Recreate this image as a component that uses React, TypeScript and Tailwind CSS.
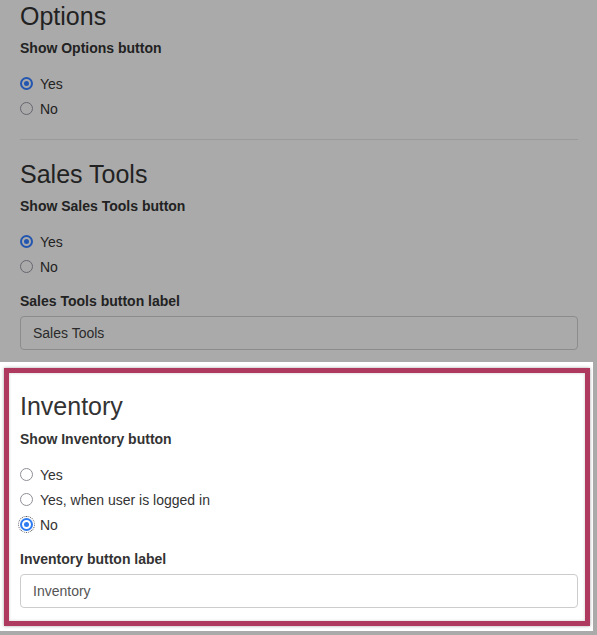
import React from 'react'

type RadioProps = { label: string; checked?: boolean; dim?: boolean; focus?: boolean }

function Radio({ label, checked, dim, focus }: RadioProps) {
  const ring = checked
    ? dim
      ? 'border-[#2356b0]'
      : 'border-[#2f7bf0]'
    : dim
      ? 'border-[#666670]'
      : 'border-[#8e8e96]'
  return (
    <div className="flex h-[25px] items-center gap-[7px]">
      <span
        className={`flex h-[13px] w-[13px] items-center justify-center rounded-full ${checked ? 'border-2' : 'border-[1.5px]'} ${ring} ${focus ? 'outline-1 outline-dotted outline-offset-1 outline-[#555]' : ''}`}
      >
        {checked && (
          <span className={`h-[5px] w-[5px] rounded-full ${dim ? 'bg-[#2356b0]' : 'bg-[#2f7bf0]'}`} />
        )}
      </span>
      <span className={`text-[14px] leading-[20px] ${dim ? 'text-[#222]' : 'text-[#333]'}`}>{label}</span>
    </div>
  )
}

function Heading({ children, dim }: { children: React.ReactNode; dim?: boolean }) {
  return (
    <h3 className={`h-[28px] text-[25px] leading-[28px] ${dim ? 'text-[#222]' : 'text-[#333]'}`}>
      {children}
    </h3>
  )
}

function Label({ children, dim, className = 'mt-[8px]' }: { children: React.ReactNode; dim?: boolean; className?: string }) {
  return (
    <div className={`${className} text-[14px] font-bold leading-[20px] ${dim ? 'text-[#222]' : 'text-[#333]'}`}>
      {children}
    </div>
  )
}

export default function App() {
  return (
    <div
      className="h-[635px] w-[597px] overflow-hidden bg-[#aaaaaa]"
      style={{ fontFamily: '"Liberation Sans", Arial, sans-serif' }}
    >
      <div className="pt-[2px] pl-[20px] pr-[19px]">
        <Heading dim>Options</Heading>
        <Label dim>Show Options button</Label>
        <div className="mt-[13px]">
          <Radio label="Yes" checked dim />
          <Radio label="No" dim />
        </div>
        <div className="mt-[18px] border-t border-[#9a9a9a]" />

        <div className="mt-[20px]">
          <Heading dim>Sales Tools</Heading>
          <Label dim>Show Sales Tools button</Label>
          <div className="mt-[13px]">
            <Radio label="Yes" checked dim />
            <Radio label="No" dim />
          </div>
          <Label dim className="mt-[12px]">Sales Tools button label</Label>
          <div className="mt-[5px] flex h-[34px] items-center rounded-[4px] border border-[#8c8c8c] px-[12px] text-[14px] text-[#2a2a2a]">
            Sales Tools
          </div>
        </div>
      </div>

      <div className="mt-[12px] mr-[4px] bg-white pt-[6px] pb-[5px] pl-[4px] pr-[3px]">
        <div className="border-[5px] border-[#ae3a60] pt-[19px] pb-[13px] pl-[11px] pr-[7px] shadow-[0_0_3px_rgba(0,0,0,0.35),inset_0_0_3px_rgba(0,0,0,0.2)]">
          <Heading>Inventory</Heading>
          <Label className="mt-[9px]">Show Inventory button</Label>
          <div className="mt-[13px]">
            <Radio label="Yes" />
            <Radio label="Yes, when user is logged in" />
            <Radio label="No" checked focus />
          </div>
          <Label className="mt-[12px]">Inventory button label</Label>
          <div className="mt-[5px] flex h-[34px] items-center rounded-[4px] border border-[#cccccc] px-[12px] text-[14px] text-[#555]">
            Inventory
          </div>
        </div>
      </div>
    </div>
  )
}
